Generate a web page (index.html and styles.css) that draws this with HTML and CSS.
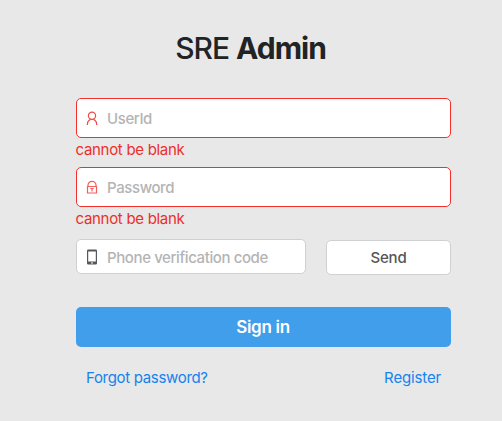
FILE: index.html
```html
<!DOCTYPE html>
<html lang="en">
<head>
<meta charset="utf-8">
<title>SRE Admin</title>
<link rel="stylesheet" href="styles.css">
</head>
<body>
<main class="login">
  <h1 class="title"><span class="brand">SRE</span> <b>Admin</b></h1>
  <form class="form" novalidate>
    <div class="field error">
      <svg class="icon" viewBox="0 0 12 16"><circle cx="6" cy="5.7" r="3.6"/><path d="M1.4 15V13.7c0-2.2 1.7-3.7 3.2-4.5M10.6 15V13.7c0-2.2-1.7-3.7-3.2-4.5"/></svg>
      <span class="placeholder user">UserId</span>
    </div>
    <p class="message">cannot be blank</p>
    <div class="field error">
      <svg class="icon lock" viewBox="0 0 12 16"><path d="M1.5 7.5h9v6.5h-9zM2 7.5V6.3a4 4 0 0 1 8 0v1.2M6 9.5v3M4.3 9.5h3.4"/></svg>
      <span class="placeholder pass">Password</span>
    </div>
    <p class="message">cannot be blank</p>
    <div class="code-row">
      <div class="field code">
        <svg class="icon phone" viewBox="0 0 12 16"><path fill-rule="evenodd" d="M2.2 .5h7.6q1.2 0 1.2 1.2v12.6q0 1.2-1.2 1.2H2.2q-1.2 0-1.2-1.2V1.7Q1 .5 2.2 .5ZM2.2 2.5v10h7.6v-10ZM5 13.5v1h2v-1Z"/></svg>
        <span class="placeholder verify">Phone verification code</span>
      </div>
      <button class="send" type="button"><span>Send</span></button>
    </div>
    <button class="submit" type="button"><span>Sign in</span></button>
    <nav class="links"><a class="forgot">Forgot password?</a><a class="register">Register</a></nav>
  </form>
</main>
</body>
</html>
```
FILE: styles.css
```css
* { box-sizing: border-box; }
body { margin: 0; height: 421px; background: #e8e8e8; font: 15px/20px Inter, "Liberation Sans", sans-serif; overflow: hidden; }
.login { width: 375px; margin-left: 76px; padding-top: 28px; }
.title { margin: 0 26px 30px 0; text-align: center; font-size: 30px; line-height: 40px; font-weight: 500; color: #212325; letter-spacing: -1px; white-space: nowrap; }
.title b { font-weight: 700; }
.field { display: flex; align-items: center; height: 40px; padding-left: 9px; border: 1px solid #ccc; border-radius: 5px; background: #fff; white-space: nowrap; }
.field.error { border-color: #f3302b; }
.icon { width: 12px; height: 16px; margin-right: 9px; fill: none; stroke: #f04a45; stroke-width: 1.2; }
.icon.lock { stroke: #f2605b; }
.icon.phone { fill: #55585b; stroke: none; }
.placeholder { padding-top: 2px; color: #b4b4b4; font-weight: 450; letter-spacing: -.4px; }
.message { margin: 0 0 0 -.5px; height: 29px; padding-top: 2px; color: #ec2f2b; letter-spacing: -.3px; white-space: nowrap; }
.code-row { display: flex; justify-content: space-between; margin-top: 3px; height: 36px; }
.code { width: 230px; height: 35px; border-color: #d0d0d0; }
button { font: inherit; padding: 0; border-radius: 5px; }
.send { width: 125px; height: 35px; margin-top: 1px; border: 1px solid #d0d0d0; background: #fff; color: #555; font-weight: 500; letter-spacing: -.15px; }
.submit { display: block; width: 100%; height: 40px; margin-top: 32px; border: 0; background: #409eeb; color: #fff; font-size: 17px; font-weight: 600; letter-spacing: -.3px; }
.submit span { margin-right: 1px; }
.links { display: flex; justify-content: space-between; margin: 21px 10px 0; color: #1682ed; letter-spacing: -.32px; }
.register { letter-spacing: -.15px; }
```
